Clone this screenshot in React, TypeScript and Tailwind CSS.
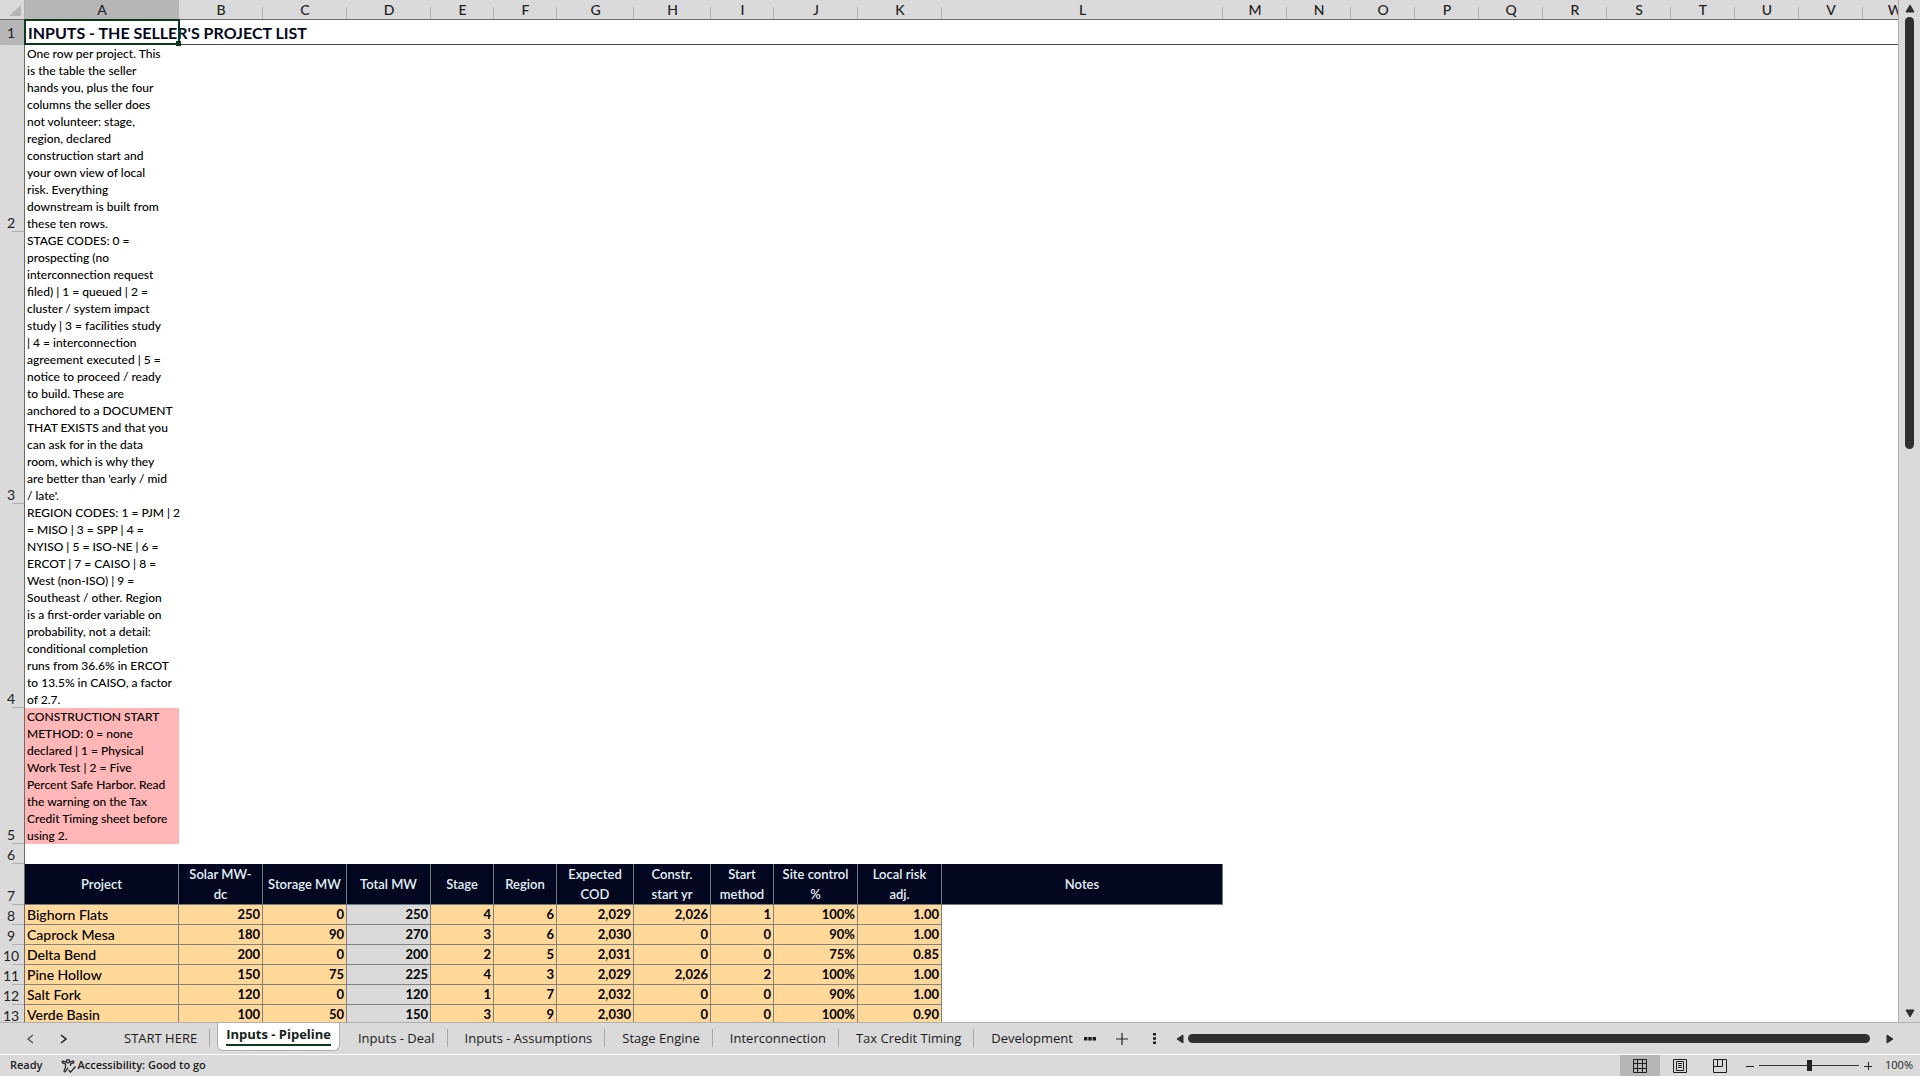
import React from "react";

type Project = { name: string; values: string[] };

const columns = [
  { letter: "A", col: "w-[154px]" },
  { letter: "B", col: "w-[84px]" },
  { letter: "C", col: "w-[84px]" },
  { letter: "D", col: "w-[84px]" },
  { letter: "E", col: "w-[63px]" },
  { letter: "F", col: "w-[63px]" },
  { letter: "G", col: "w-[77px]" },
  { letter: "H", col: "w-[77px]" },
  { letter: "I", col: "w-[63px]" },
  { letter: "J", col: "w-[84px]" },
  { letter: "K", col: "w-[84px]" },
  { letter: "L", col: "w-[281px]" },
  ..."MNOPQRSTUVW".split("").map((letter) => ({ letter, col: "w-16" })),
];

const notes = [
  {
    row: 2,
    warn: false,
    lines: [
      "One row per project. This", "is the table the seller", "hands you, plus the four", "columns the seller does",
      "not volunteer: stage,", "region, declared", "construction start and", "your own view of local", "risk. Everything",
      "downstream is built from", "these ten rows.",
    ],
  },
  {
    row: 3,
    warn: false,
    lines: [
      "STAGE CODES: 0 =", "prospecting (no", "interconnection request", "filed) | 1 = queued | 2 =", "cluster / system impact",
      "study | 3 = facilities study", "| 4 = interconnection", "agreement executed | 5 =", "notice to proceed / ready",
      "to build. These are", "anchored to a DOCUMENT", "THAT EXISTS and that you", "can ask for in the data",
      "room, which is why they", "are better than 'early / mid", "/ late'.",
    ],
  },
  {
    row: 4,
    warn: false,
    lines: [
      "REGION CODES: 1 = PJM | 2", "= MISO | 3 = SPP | 4 =", "NYISO | 5 = ISO-NE | 6 =", "ERCOT | 7 = CAISO | 8 =",
      "West (non-ISO) | 9 =", "Southeast / other. Region", "is a first-order variable on", "probability, not a detail:",
      "conditional completion", "runs from 36.6% in ERCOT", "to 13.5% in CAISO, a factor", "of 2.7.",
    ],
  },
  {
    row: 5,
    warn: true,
    lines: [
      "CONSTRUCTION START", "METHOD: 0 = none", "declared | 1 = Physical", "Work Test | 2 = Five",
      "Percent Safe Harbor. Read", "the warning on the Tax", "Credit Timing sheet before", "using 2.",
    ],
  },
];

const headings = [
  "Project", "Solar MW-\ndc", "Storage MW", "Total MW", "Stage", "Region", "Expected\nCOD", "Constr.\nstart yr",
  "Start\nmethod", "Site control\n%", "Local risk\nadj.", "Notes",
];

const projects: Project[] = [
  { name: "Bighorn Flats", values: ["250", "0", "250", "4", "6", "2,029", "2,026", "1", "100%", "1.00"] },
  { name: "Caprock Mesa", values: ["180", "90", "270", "3", "6", "2,030", "0", "0", "90%", "1.00"] },
  { name: "Delta Bend", values: ["200", "0", "200", "2", "5", "2,031", "0", "0", "75%", "0.85"] },
  { name: "Pine Hollow", values: ["150", "75", "225", "4", "3", "2,029", "2,026", "2", "100%", "1.00"] },
  { name: "Salt Fork", values: ["120", "0", "120", "1", "7", "2,032", "0", "0", "90%", "1.00"] },
  { name: "Verde Basin", values: ["100", "50", "150", "3", "9", "2,030", "0", "0", "100%", "0.90"] },
];

const tabs = [
  "START HERE", "Inputs - Pipeline", "Inputs - Deal", "Inputs - Assumptions", "Stage Engine", "Interconnection",
  "Tax Credit Timing", "Development",
];

function RowHeader({ n, selected = false }: { n: number; selected?: boolean }) {
  return (
    <th
      scope="row"
      className={`relative border-r border-[#6b6b6b] p-0 pr-0.5 text-sm font-normal text-[#222] ${
        selected ? "bg-[#b6b6b6] align-middle leading-5" : "bg-[#dadada] align-bottom leading-[18px]"
      }`}
    >
      {n}
      <span className="absolute right-0 bottom-0 h-px w-3 bg-[#b0b0b0]" />
    </th>
  );
}

function Sheet() {
  return (
    <table className="w-[1927px] table-fixed border-separate border-spacing-0 font-['Lato',sans-serif] text-black">
      <colgroup>
        <col className="w-[25px]" />
        {columns.map((c) => (
          <col key={c.letter} className={c.col} />
        ))}
      </colgroup>
      <thead>
        <tr className="h-5">
          <th className="border-r border-b border-r-[#b0b0b0] border-b-[#6b6b6b] bg-[#dadada] p-0" aria-label="Select all">
            <svg viewBox="0 0 24 19" className="block h-[19px] w-6">
              <path d="M21 5v11H9z" fill="#b4b4b4" />
            </svg>
          </th>
          {columns.map((c) => (
            <th
              key={c.letter}
              scope="col"
              className={`relative border-b border-[#6b6b6b] p-0 text-sm leading-[19px] font-medium text-[#222] ${
                c.letter === "A" ? "bg-[#b6b6b6]" : "bg-[#dadada]"
              }`}
            >
              {c.letter}
              <span className="absolute right-0 bottom-0 h-3 w-px bg-[#b0b0b0]" />
            </th>
          ))}
        </tr>
      </thead>
      <tbody>
        <tr className="h-[25px]">
          <RowHeader n={1} selected />
          <td className="relative border-b border-[#4a4a4a] p-0 pl-[3px] align-bottom">
            <h1 className="text-base leading-[22px] font-bold whitespace-nowrap text-[#030720]">
              INPUTS - THE SELLER&apos;S PROJECT LIST
            </h1>
            <span className="absolute -top-px -right-px -bottom-px -left-px border-2 border-[#0b3a1c]" />
            <span className="absolute -right-0.5 -bottom-0.5 size-[5px] bg-[#0b3a1c]" />
          </td>
          <td colSpan={22} className="border-b border-[#4a4a4a] p-0" />
        </tr>
        {notes.map((note) => (
          <tr key={note.row}>
            <RowHeader n={note.row} />
            <td
              className={`p-0 pl-0.5 align-bottom text-xs leading-[17px] font-medium whitespace-pre ${
                note.warn ? "bg-[#ffb6b6]" : "bg-white"
              }`}
            >
              {note.lines.join("\n")}
            </td>
            <td colSpan={22} className="p-0" />
          </tr>
        ))}
        <tr className="h-5">
          <RowHeader n={6} />
          <td colSpan={23} className="p-0" />
        </tr>
        <tr className="h-[41px]">
          <RowHeader n={7} />
          {headings.map((h) => (
            <td
              key={h}
              className="border-r border-b border-[#6f7f80] bg-[#030720] p-0 text-center align-middle text-[13px] leading-5 font-semibold whitespace-pre text-[#e4f1f8]"
            >
              {h}
            </td>
          ))}
          <td colSpan={11} className="p-0" />
        </tr>
        {projects.map((p, i) => (
          <tr key={p.name} className="h-5">
            <RowHeader n={8 + i} />
            <td className="border-r border-b border-[#80827c] bg-[#ffd89a] p-0 pl-0.5 text-sm leading-[19px] font-medium whitespace-nowrap">
              {p.name}
            </td>
            {p.values.map((v, j) => (
              <td
                key={j}
                className={`border-r border-b border-[#80827c] p-0 pr-0.5 text-right text-[13px] leading-[19px] font-bold ${
                  j === 2 ? "bg-[#dadada]" : "bg-[#ffd89a]"
                }`}
              >
                {v}
              </td>
            ))}
            <td colSpan={12} className="p-0" />
          </tr>
        ))}
      </tbody>
    </table>
  );
}

function VerticalScroll() {
  return (
    <div className="flex w-[21px] shrink-0 flex-col items-center bg-[#dadada] py-1">
      <button type="button" aria-label="Scroll up">
        <svg viewBox="0 0 10 9" className="block h-[9px] w-2.5"><path d="M5 1 9 8H1z" fill="#2f2f2f" stroke="#2f2f2f" strokeLinejoin="round" /></svg>
      </button>
      <div className="mt-1 min-h-0 w-[9px] flex-1">
        <div className="h-[432px] max-h-full rounded-full bg-[#2f2f2f]" />
      </div>
      <button type="button" aria-label="Scroll down">
        <svg viewBox="0 0 10 9" className="block h-[9px] w-2.5"><path d="M5 8 1 1h8z" fill="#2f2f2f" stroke="#2f2f2f" strokeLinejoin="round" /></svg>
      </button>
    </div>
  );
}

function TabBar() {
  return (
    <div className="flex h-8 shrink-0 items-stretch border-t border-[#b0b0b0] font-['Open_Sans',sans-serif] text-sm text-[#1c1c1c]">
      <div className="flex w-[109px] shrink-0 items-center gap-[23px] pl-[26px]">
        <button type="button" aria-label="Previous sheet">
          <svg viewBox="0 0 10 12" className="h-3 w-2.5" fill="none" stroke="#555" strokeWidth="1.4"><path d="M7 2 2 6l5 4" /></svg>
        </button>
        <button type="button" aria-label="Next sheet">
          <svg viewBox="0 0 10 12" className="h-3 w-2.5" fill="none" stroke="#222" strokeWidth="1.6"><path d="m2 2 5 4-5 4" /></svg>
        </button>
      </div>
      <nav className="flex w-[967px] shrink-0 overflow-hidden">
        {tabs.map((t, i) =>
          i === 1 ? (
            <button key={t} type="button" className="mr-[3px] mb-[3px] ml-[5px] shrink-0 rounded-b-md border border-t-0 border-[#b0b0b0] bg-white px-2 pb-1 font-bold text-[#14241a]">
              <span className="block border-b-2 border-[#0b3a1c] text-[13px] leading-5 whitespace-nowrap">{t}</span>
            </button>
          ) : (
            <button key={t} type="button" className="relative shrink-0 px-[15px] text-[13px] font-medium whitespace-nowrap">
              {t}
              {i < tabs.length - 1 && <span className="absolute top-1.5 right-0.5 h-[18px] w-px bg-[#a8a8a8]" />}
            </button>
          ),
        )}
      </nav>
      <button type="button" aria-label="More sheets" className="ml-2 self-center">
        <svg viewBox="0 0 12 4" className="h-1 w-3"><path d="M0 0h3.400v3.400H0zM4.300 0h3.400v3.400H4.300zM8.600 0H12v3.400H8.600z" fill="#1c1c1c" /></svg>
      </button>
      <button type="button" aria-label="New sheet" className="ml-5 self-center">
        <svg viewBox="0 0 12 12" className="size-3" stroke="#222" strokeWidth="1.200"><path d="M6 0v12M0 6h12" /></svg>
      </button>
      <button type="button" aria-label="Resize tab bar" className="ml-[25px] self-center">
        <svg viewBox="0 0 3 11" className="h-[11px] w-[3px]"><path d="M0 0h3v2.500H0zM0 4.200h3v2.500H0zM0 8.500h3V11H0z" fill="#222" /></svg>
      </button>
      <div className="ml-5 flex flex-1 items-center">
        <button type="button" aria-label="Scroll left">
          <svg viewBox="0 0 8 10" className="h-2.5 w-2"><path d="M1 5 7 1v8z" fill="#2f2f2f" stroke="#2f2f2f" strokeLinejoin="round" /></svg>
        </button>
        <div className="mr-4 ml-1 h-[9px] flex-1 rounded-full bg-[#2f2f2f]" />
        <button type="button" aria-label="Scroll right" className="mr-[26px]">
          <svg viewBox="0 0 8 10" className="h-2.5 w-2"><path d="M7 5 1 1v8z" fill="#2f2f2f" stroke="#2f2f2f" strokeLinejoin="round" /></svg>
        </button>
      </div>
    </div>
  );
}

function StatusBar() {
  return (
    <div className="flex h-[22px] shrink-0 items-center border-t border-white font-['Open_Sans',sans-serif] text-[11px] text-[#1c1c1c]">
      <span className="ml-2.5 font-semibold">Ready</span>
      <button type="button" className="ml-[19px] flex items-center font-semibold">
        <svg viewBox="0 0 16 14" className="h-3.5 w-4" fill="none" stroke="#222" strokeWidth="1.200">
          <circle cx="7" cy="2.200" r="1.600" />
          <path d="M5.500 3.200 2 2.200c-1.200 0-1.200 1.600 0 1.900l2.500.9v3L3 12c0 1.200 1.300 1.300 1.700.3L7 8.500M8.500 3.200l3.500-1c1.200 0 1.200 1.600 0 1.900L9.500 5v2M7.500 11l2 2.200L14.500 7.500" />
        </svg>
        Accessibility: Good to go
      </button>
      <div className="ml-auto flex h-full items-center">
        <button type="button" aria-label="Normal view" className="flex h-full w-10 items-center justify-center bg-[#b6b6b6]">
          <svg viewBox="0 0 14 14" className="size-3.5" fill="none" stroke="#1c1c1c"><path d="M.5.5h13v13H.5zM4.500.5v13M9.500.5v13M.5 4.500h13M.5 9.500h13" /></svg>
        </button>
        <button type="button" aria-label="Page layout view" className="flex h-full w-10 items-center justify-center">
          <svg viewBox="0 0 14 14" className="size-3.5" fill="none" stroke="#1c1c1c"><path d="M.5.5h13v13H.5zM3.500 2.500h7v9h-7zM5 4.500h4M5 6.500h4M5 8.500h4" /></svg>
        </button>
        <button type="button" aria-label="Page break preview" className="flex h-full w-10 items-center justify-center">
          <svg viewBox="0 0 14 14" className="size-3.5" fill="none" stroke="#1c1c1c"><path d="M.5.5h13v13H.5zM4.500.5v7M.5 7.500h9V.5" /></svg>
        </button>
        <button type="button" aria-label="Zoom out" className="ml-1.5">
          <svg viewBox="0 0 8 8" className="size-2" stroke="#222"><path d="M0 4.500h8" /></svg>
        </button>
        <input
          type="range"
          aria-label="Zoom"
          min={0}
          max={100}
          defaultValue={50}
          className="mx-[5px] h-3 w-[100px] appearance-none bg-[linear-gradient(#333,#333)] bg-[length:100%_1px] bg-center bg-no-repeat [&::-webkit-slider-thumb]:h-[11px] [&::-webkit-slider-thumb]:w-[5px] [&::-webkit-slider-thumb]:appearance-none [&::-webkit-slider-thumb]:bg-[#222]"
        />
        <button type="button" aria-label="Zoom in">
          <svg viewBox="0 0 8 8" className="size-2" stroke="#222"><path d="M0 4.500h8M4.500 0v8" /></svg>
        </button>
        <button type="button" className="mr-[7px] ml-[13px] font-medium">100%</button>
      </div>
    </div>
  );
}

export default function App() {
  return (
    <div className="flex h-screen flex-col overflow-hidden bg-[#dadada]">
      <div className="flex min-h-0 flex-1">
        <div className="min-w-0 flex-1 overflow-hidden border-r border-[#b0b0b0] bg-white">
          <Sheet />
        </div>
        <VerticalScroll />
      </div>
      <TabBar />
      <StatusBar />
    </div>
  );
}
